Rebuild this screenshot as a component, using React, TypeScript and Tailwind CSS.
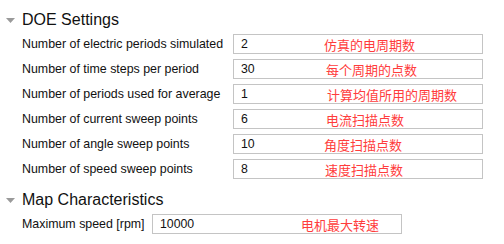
const doeRows = [
  { label: "Number of electric periods simulated", value: "2", note: "仿真的电周期数", noteX: 90 },
  { label: "Number of time steps per period", value: "30", note: "每个周期的点数", noteX: 92 },
  { label: "Number of periods used for average", value: "1", note: "计算均值所用的周期数", noteX: 93 },
  { label: "Number of current sweep points", value: "6", note: "电流扫描点数", noteX: 92 },
  { label: "Number of angle sweep points", value: "10", note: "角度扫描点数", noteX: 90 },
  { label: "Number of speed sweep points", value: "8", note: "速度扫描点数", noteX: 91 },
];

function Caret() {
  return (
    <svg width="9" height="5" viewBox="0 0 9 5" className="shrink-0">
      <path d="M0 0h9L4.5 5z" fill="#9a9a9a" />
    </svg>
  );
}

function Field({ value, note, noteX }: { value: string; note: string; noteX: number }) {
  return (
    <div className="relative flex h-5 w-[250px] items-center border border-[#c4c4c4] bg-white pl-[7px] text-[12.3px] text-[#111]">
      {value}
      <span
        className="absolute top-0 flex h-full items-center text-[13px] leading-none text-[#ff3c3c] [font-family:'Noto_Sans_CJK_SC',sans-serif]"
        style={{ left: noteX }}
      >
        {note}
      </span>
    </div>
  );
}

function Heading({ title }: { title: string }) {
  return (
    <div className="flex h-5 items-center">
      <div className="flex w-[22px] justify-start pl-[6px]">
        <Caret />
      </div>
      <span className="text-[16px] leading-5 text-[#111]">{title}</span>
    </div>
  );
}

export default function App() {
  return (
    <div className="h-[244px] w-[504px] bg-white pt-[10px] [font-family:'Liberation_Sans',Arial,sans-serif]">
      <Heading title="DOE Settings" />
      <div className="mt-1 flex flex-col gap-[5px] pl-[22px]">
        {doeRows.map((r) => (
          <div key={r.label} className="flex items-center">
            <span className="w-[211px] text-[12.4px] text-[#111]">{r.label}</span>
            <Field value={r.value} note={r.note} noteX={r.noteX} />
          </div>
        ))}
      </div>
      <div className="mt-[11px]">
        <Heading title="Map Characteristics" />
      </div>
      <div className="mt-1 flex items-center pl-[22px]">
        <span className="w-[130px] text-[12.4px] text-[#111]">Maximum speed [rpm]</span>
        <Field value="10000" note="电机最大转速" noteX={148} />
      </div>
    </div>
  );
}
